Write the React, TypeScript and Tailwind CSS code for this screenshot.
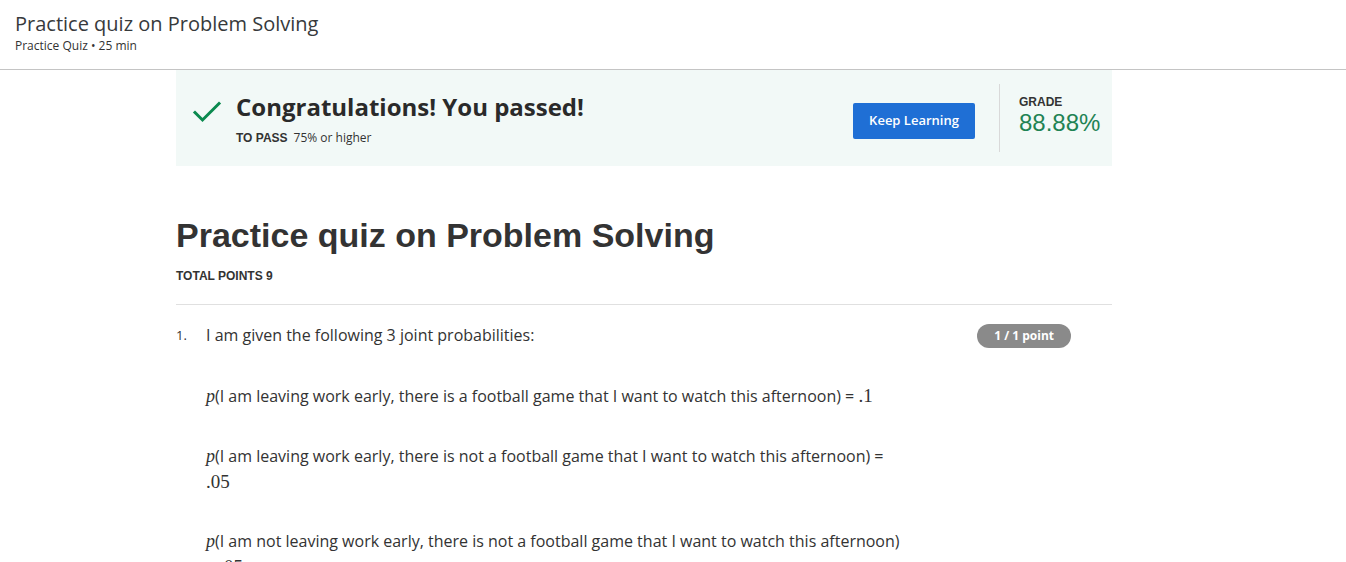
import React from "react";

const sans = { fontFamily: '"Open Sans", "Noto Sans", sans-serif' };
const arial = { fontFamily: '"Liberation Sans", Arial, sans-serif' };

function MathP() {
  return (
    <span className="italic text-[18px]" style={{ fontFamily: '"Liberation Serif", "DejaVu Serif", serif' }}>
      p
    </span>
  );
}

function Num({ children }: { children: React.ReactNode }) {
  return (
    <span className="text-[19px]" style={{ fontFamily: '"Liberation Serif", "DejaVu Serif", serif' }}>
      {children}
    </span>
  );
}

export default function App() {
  return (
    <div className="min-h-[562px] bg-white text-[#333]" style={sans}>
      <header className="h-[70px] border-b border-[#c4c4c4] px-[15px] pt-[10px]">
        <h1 className="text-[20px] leading-[28px] text-[#373a3c] font-normal">Practice quiz on Problem Solving</h1>
        <p className="text-[12px] leading-[16px] text-[#333]">Practice Quiz • 25 min</p>
      </header>

      <main className="w-[936px] ml-[176px]">
        <section className="h-[96px] bg-[#f2f9f7] flex items-center">
          <div className="flex-1 flex items-start pl-[16px]">
            <svg width="30" height="30" viewBox="0 0 30 30" className="mt-[7px]">
              <path d="M3 15.5 L10.5 23 L27 6.5" fill="none" stroke="#0b8a4f" strokeWidth="3" strokeLinecap="square" />
            </svg>
            <div className="ml-[14px]">
              <div className="text-[24px] font-bold leading-[34px] text-[#2a2a2a]">Congratulations! You passed!</div>
              <div className="mt-[6px] text-[12px] leading-[16px] flex items-baseline">
                <span className="font-bold text-[#333]" style={arial}>TO PASS</span>
                <span className="ml-[6px] text-[#333]">75% or higher</span>
              </div>
            </div>
          </div>
          <button className="w-[122px] h-[36px] mt-[6px] bg-[#1f6fd5] rounded-[2px] text-white text-[13px] font-semibold mr-[24px]">
            Keep Learning
          </button>
          <div className="h-[68px] border-l border-[#d9d9d9] pl-[19px] pr-[12px] w-[113px] pt-[11px]">
            <div className="text-[12px] font-bold leading-[14px] text-[#333]" style={arial}>GRADE</div>
            <div className="text-[24px] leading-[28px] text-[#1f8354]" style={arial}>88.88%</div>
          </div>
        </section>

        <h2 className="mt-[48px] text-[34px] leading-[42px] font-bold text-[#333]" style={arial}>
          Practice quiz on Problem Solving
        </h2>
        <div className="mt-[13px] text-[12px] leading-[14px] font-bold text-[#333]" style={arial}>
          TOTAL POINTS 9
        </div>
        <div className="mt-[21px] border-t border-[#e0e0e0]" />

        <div className="flex pt-[18px]">
          <div className="w-[30px] text-[13px] leading-[24px] text-[#333]">1.</div>
          <div className="w-[702px] text-[16px] leading-[25px] text-[#333]">
            <p>I am given the following 3 joint probabilities:</p>
            <p className="mt-[35px]">
              <MathP />(I am leaving work early, there is a football game that I want to watch this afternoon) = <Num>.1</Num>
            </p>
            <p className="mt-[35px]">
              <MathP />(I am leaving work early, there is not a football game that I want to watch this afternoon) = <Num>.05</Num>
            </p>
            <p className="mt-[34px]">
              <MathP />(I am not leaving work early, there is not a football game that I want to watch this afternoon) = <Num>.05</Num>
            </p>
          </div>
          <div className="flex-1 flex justify-end pr-[41px] pt-[1px]">
            <span className="h-[24px] px-[17px] rounded-full bg-[#8a8a8a] text-white text-[12px] font-bold leading-[24px]">
              1 / 1 point
            </span>
          </div>
        </div>
      </main>
    </div>
  );
}
